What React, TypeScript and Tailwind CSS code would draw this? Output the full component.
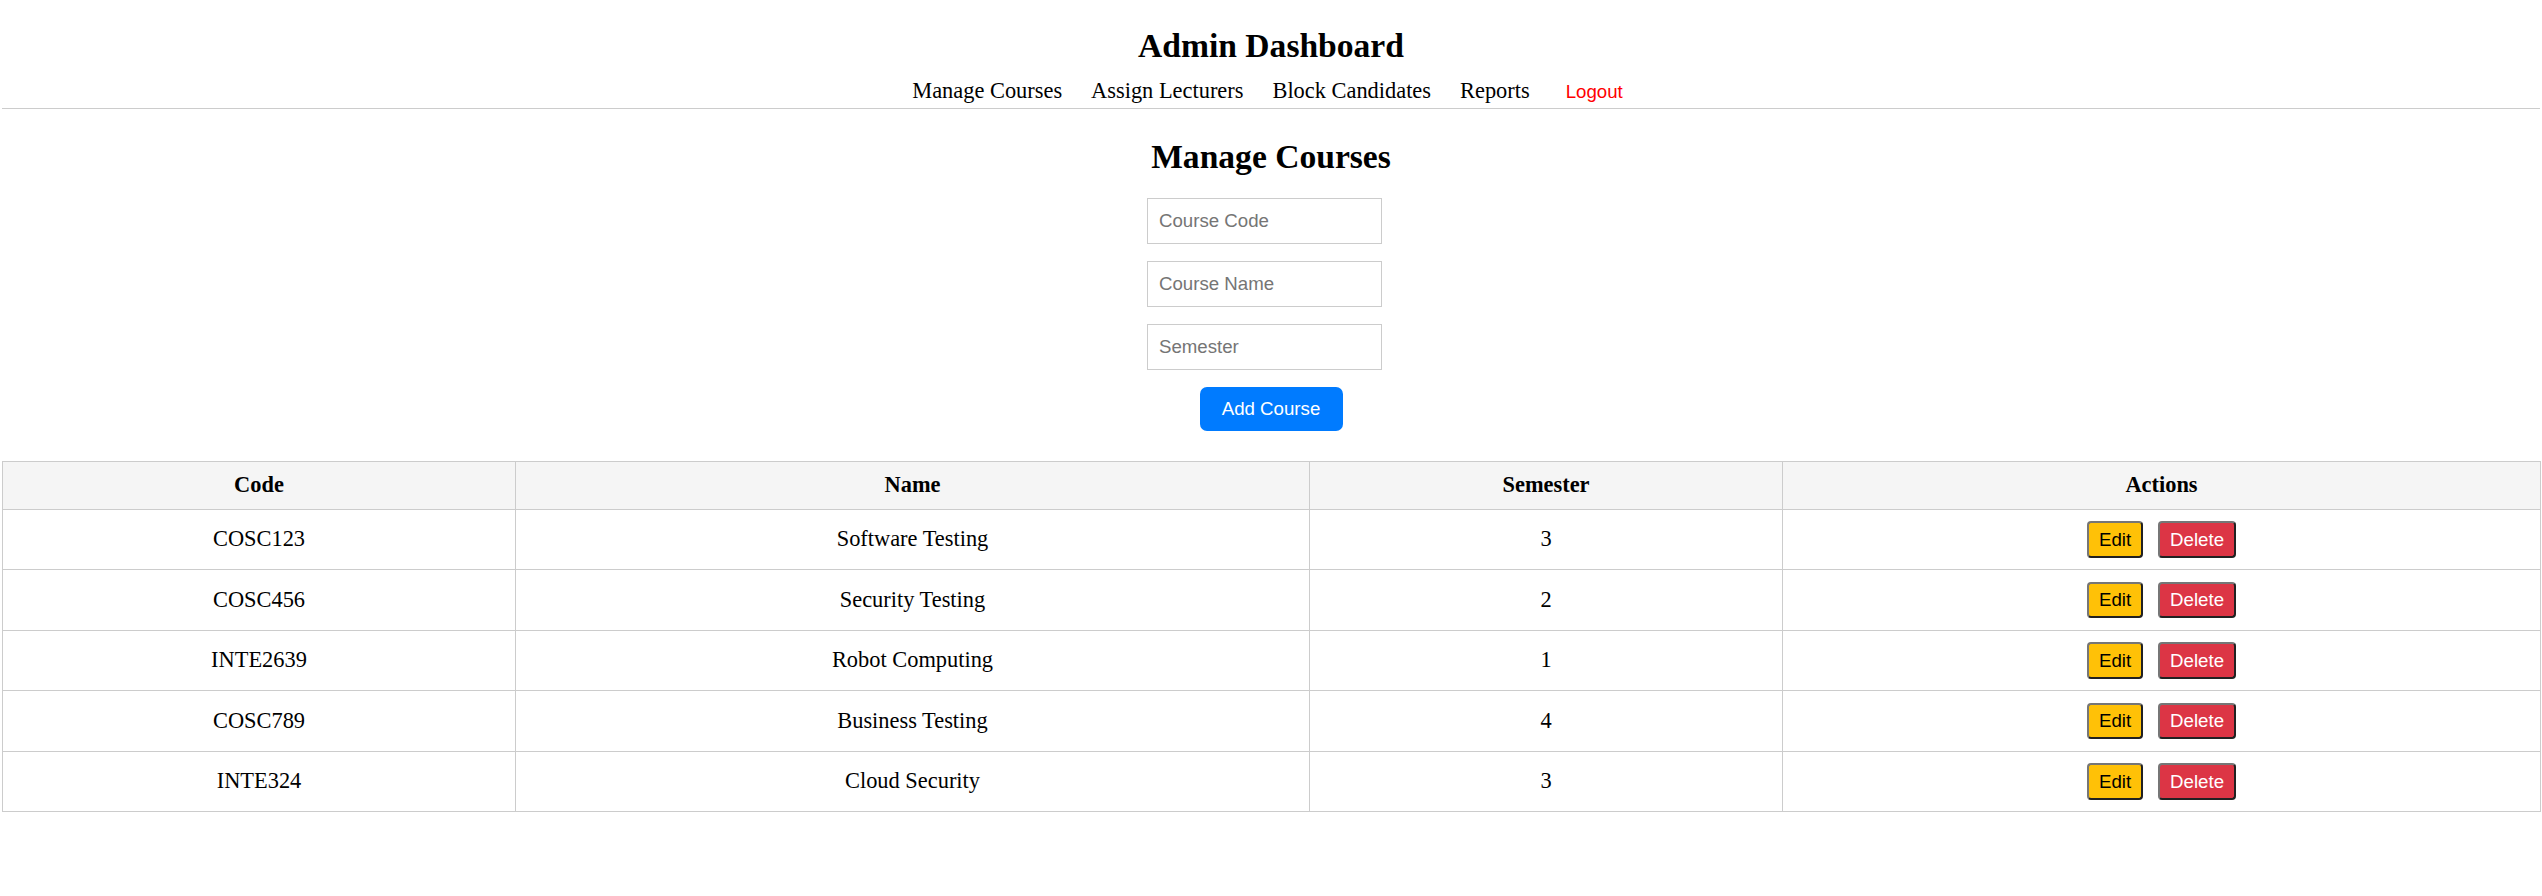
const courses = [
  { code: "COSC123", name: "Software Testing", semester: 3 },
  { code: "COSC456", name: "Security Testing", semester: 2 },
  { code: "INTE2639", name: "Robot Computing", semester: 1 },
  { code: "COSC789", name: "Business Testing", semester: 4 },
  { code: "INTE324", name: "Cloud Security", semester: 3 },
]

const navLinks = ["Manage Courses", "Assign Lecturers", "Block Candidates", "Reports"]

export default function App() {
  return (
    <div className="min-h-screen bg-white px-[2px] font-['Liberation_Serif',serif] text-[22.4px] text-black">
      <header className="border-b border-[#ccc] pt-[26px] pb-[3px] text-center">
        <h1 className="text-[33.6px] font-bold leading-[39px]">Admin Dashboard</h1>
        <nav className="mt-[13px] flex items-baseline justify-center gap-[29px] leading-[26px]">
          {navLinks.map((link) => (
            <a key={link} href="#">
              {link}
            </a>
          ))}
          <button className="px-[7px] font-['Liberation_Sans',sans-serif] text-[18.67px] text-[#ff0000]">
            Logout
          </button>
        </nav>
      </header>

      <main className="pt-[28px]">
        <h2 className="text-center text-[33.6px] font-bold leading-[39px]">Manage Courses</h2>

        <form className="mt-[22px] flex flex-col items-center gap-[17px] font-['Liberation_Sans',sans-serif] text-[18.67px]">
          <input placeholder="Course Code" className="mr-[13px] h-[46px] w-[235px] border border-[#ccc] px-[11px] placeholder:text-[#757575] outline-none" />
          <input placeholder="Course Name" className="mr-[13px] h-[46px] w-[235px] border border-[#ccc] px-[11px] placeholder:text-[#757575] outline-none" />
          <input placeholder="Semester" className="mr-[13px] h-[46px] w-[235px] border border-[#ccc] px-[11px] placeholder:text-[#757575] outline-none" />
          <button type="button" className="h-[44px] w-[143px] rounded-[7px] bg-[#007bff] text-white">
            Add Course
          </button>
        </form>

        <table className="mt-[29.5px] w-full table-fixed border-collapse border border-[#ccc] text-center">
          <colgroup>
            <col className="w-[513px]" />
            <col className="w-[794px]" />
            <col className="w-[473px]" />
            <col className="w-[758px]" />
          </colgroup>
          <thead>
            <tr className="bg-[#f5f5f5]">
              <th className="h-[48px] border border-[#ccc]">Code</th>
              <th className="h-[48px] border border-[#ccc]">Name</th>
              <th className="h-[48px] border border-[#ccc]">Semester</th>
              <th className="h-[48px] border border-[#ccc]">Actions</th>
            </tr>
          </thead>
          <tbody>
            {courses.map((course) => (
              <tr key={course.code}>
                <td className="h-[60.5px] border border-[#ccc]">{course.code}</td>
                <td className="h-[60.5px] border border-[#ccc]">{course.name}</td>
                <td className="h-[60.5px] border border-[#ccc]">{course.semester}</td>
                <td className="h-[60.5px] border border-[#ccc]">
                  <div className="flex items-center justify-center gap-[15px] font-['Liberation_Sans',sans-serif] text-[18.67px] leading-[21.5px]">
                    <button className="rounded-[4px] border-2 border-[#767676] bg-[#ffc107] px-[10px] py-[5.5px] text-black [border-style:outset]">
                      Edit
                    </button>
                    <button className="rounded-[4px] border-2 border-[#767676] bg-[#dc3545] px-[10px] py-[5.5px] text-white [border-style:outset]">
                      Delete
                    </button>
                  </div>
                </td>
              </tr>
            ))}
          </tbody>
        </table>
      </main>
    </div>
  )
}
